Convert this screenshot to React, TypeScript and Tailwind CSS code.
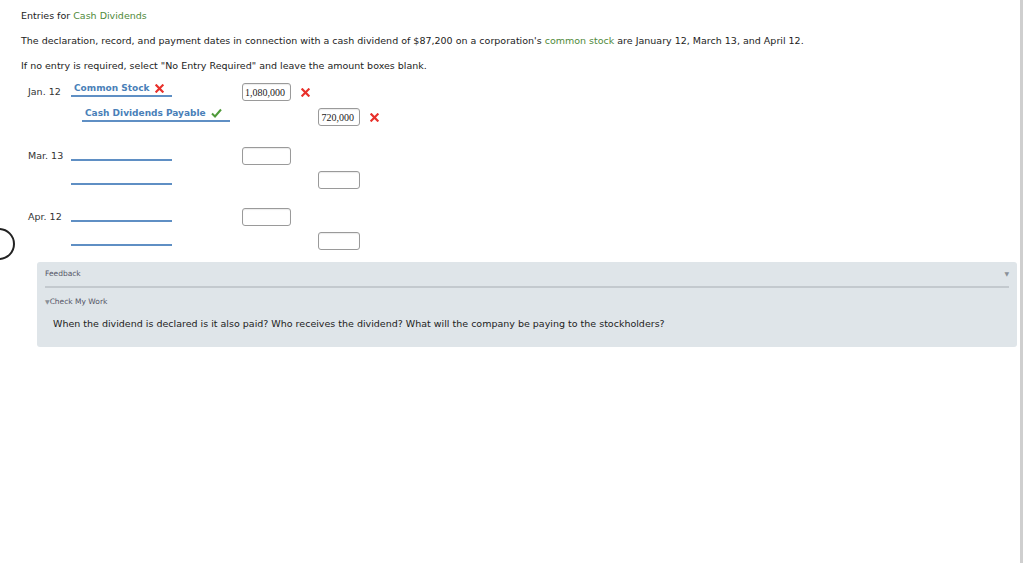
import React from "react";

const font = { fontFamily: '"DejaVu Sans", Verdana, sans-serif' };

function X() {
  return (
    <svg width="9" height="9" viewBox="0 0 10 10" className="shrink-0">
      <path d="M1.5 1.5 L8.5 8.5 M8.5 1.5 L1.5 8.5" stroke="#e8302a" strokeWidth="2.4" strokeLinecap="square" />
    </svg>
  );
}

function Check() {
  return (
    <svg width="11" height="10" viewBox="0 0 11 10" className="shrink-0">
      <path d="M1 5.5 L4 8.5 L10 1.5" stroke="#4f9a3a" strokeWidth="2" fill="none" />
    </svg>
  );
}

function Amount({ value, w }: { value?: string; w: string }) {
  return (
    <div
      className={`${w} h-[18px] border border-[#9a9a9a] rounded-[3px] bg-white flex items-center justify-end pr-[5px] text-[10px] text-[#222] shadow-[inset_0_1px_1px_rgba(0,0,0,0.08)]`}
      style={{ fontFamily: '"Liberation Serif", serif' }}
    >
      {value}
    </div>
  );
}

function Row({
  date,
  account,
  mark,
  indent,
  debit,
  credit,
  amountMark,
  h,
}: {
  date?: string;
  account?: string;
  mark?: "x" | "check";
  indent?: boolean;
  debit?: string | null;
  credit?: string | null;
  amountMark?: boolean;
  h: string;
}) {
  return (
    <div className={`flex items-center ${h}`}>
      <div className="w-[50px] pl-[7px] text-[9.5px] text-[#333] shrink-0 whitespace-nowrap">{date}</div>
      <div className="w-[171px] shrink-0">
        <div
          className={`${indent ? "ml-[11px] w-[148px]" : "w-[101px]"} h-[15px] mb-[6px] border-b-2 border-[#5f8fc4] flex items-end gap-[5px] pl-[3px] pb-[2px] leading-[10px] text-[9px] font-bold text-[#4a7fb8] whitespace-nowrap`}
        >
          {account}
          {mark === "x" && <X />}
          {mark === "check" && <Check />}
        </div>
      </div>
      <div className="w-[76px] shrink-0">
        {debit !== undefined && <div className="flex items-center gap-[10px]"><Amount value={debit ?? ""} w="w-[49px]" />{amountMark && <X />}</div>}
      </div>
      <div className="shrink-0">
        {credit !== undefined && <div className="flex items-center gap-[10px]"><Amount value={credit ?? ""} w="w-[42px]" />{amountMark && <X />}</div>}
      </div>
    </div>
  );
}

export default function App() {
  return (
    <div className="w-[1024px] h-[563px] bg-white flex relative overflow-hidden" style={font}>
      <div className="flex-1 pl-[21px] pt-[9px] text-[#222]">
        <p className="text-[9.5px] leading-[14px]">
          Entries for <span className="text-[#4f8a3a]">Cash Dividends</span>
        </p>
        <p className="text-[9.5px] leading-[14px] mt-[11px]">
          The declaration, record, and payment dates in connection with a cash dividend of $87,200 on a corporation's{" "}
          <span className="text-[#4f8a3a]">common stock</span> are January 12, March 13, and April 12.
        </p>
        <p className="text-[9.5px] leading-[14px] mt-[11px]">
          If no entry is required, select "No Entry Required" and leave the amount boxes blank.
        </p>

        <div className="mt-[7px]">
          <Row h="h-[24px]" date="Jan. 12" account="Common Stock" mark="x" debit="1,080,000" amountMark />
          <Row h="h-[26px]" account="Cash Dividends Payable" mark="check" indent credit="720,000" amountMark />
          <div className="h-[14px]" />
          <Row h="h-[24px]" date="Mar. 13" debit={null} />
          <Row h="h-[24px]" credit={null} />
          <div className="h-[13px]" />
          <Row h="h-[24px]" date="Apr. 12" debit={null} />
          <Row h="h-[24px]" credit={null} />
        </div>

        <div className="mt-[9px] ml-[16px] w-[980px] h-[85px] bg-[#dfe5e9] rounded-[3px] px-[8px] pt-[6px]">
          <div className="flex justify-between items-center text-[7.5px] text-[#556]">
            <span>Feedback</span>
            <span className="text-[#8a9098] text-[6px]">▼</span>
          </div>
          <div className="mt-[7px] border-t-2 border-[#c3c9ce]" />
          <div className="mt-[8px] text-[7.5px] text-[#556]">
            <span className="text-[#8a9098] text-[6px]">▼</span>Check My Work
          </div>
          <p className="mt-[9px] ml-[8px] text-[9.5px] text-[#222]">
            When the dividend is declared is it also paid? Who receives the dividend? What will the company be paying to the stockholders?
          </p>
        </div>
      </div>
      <div className="w-[3px] h-full bg-[#cfcfcf] mr-[1px]" />
      <div className="absolute left-[-17px] top-[228px] w-[32px] h-[32px] rounded-full border-2 border-[#222] bg-white" />
    </div>
  );
}
